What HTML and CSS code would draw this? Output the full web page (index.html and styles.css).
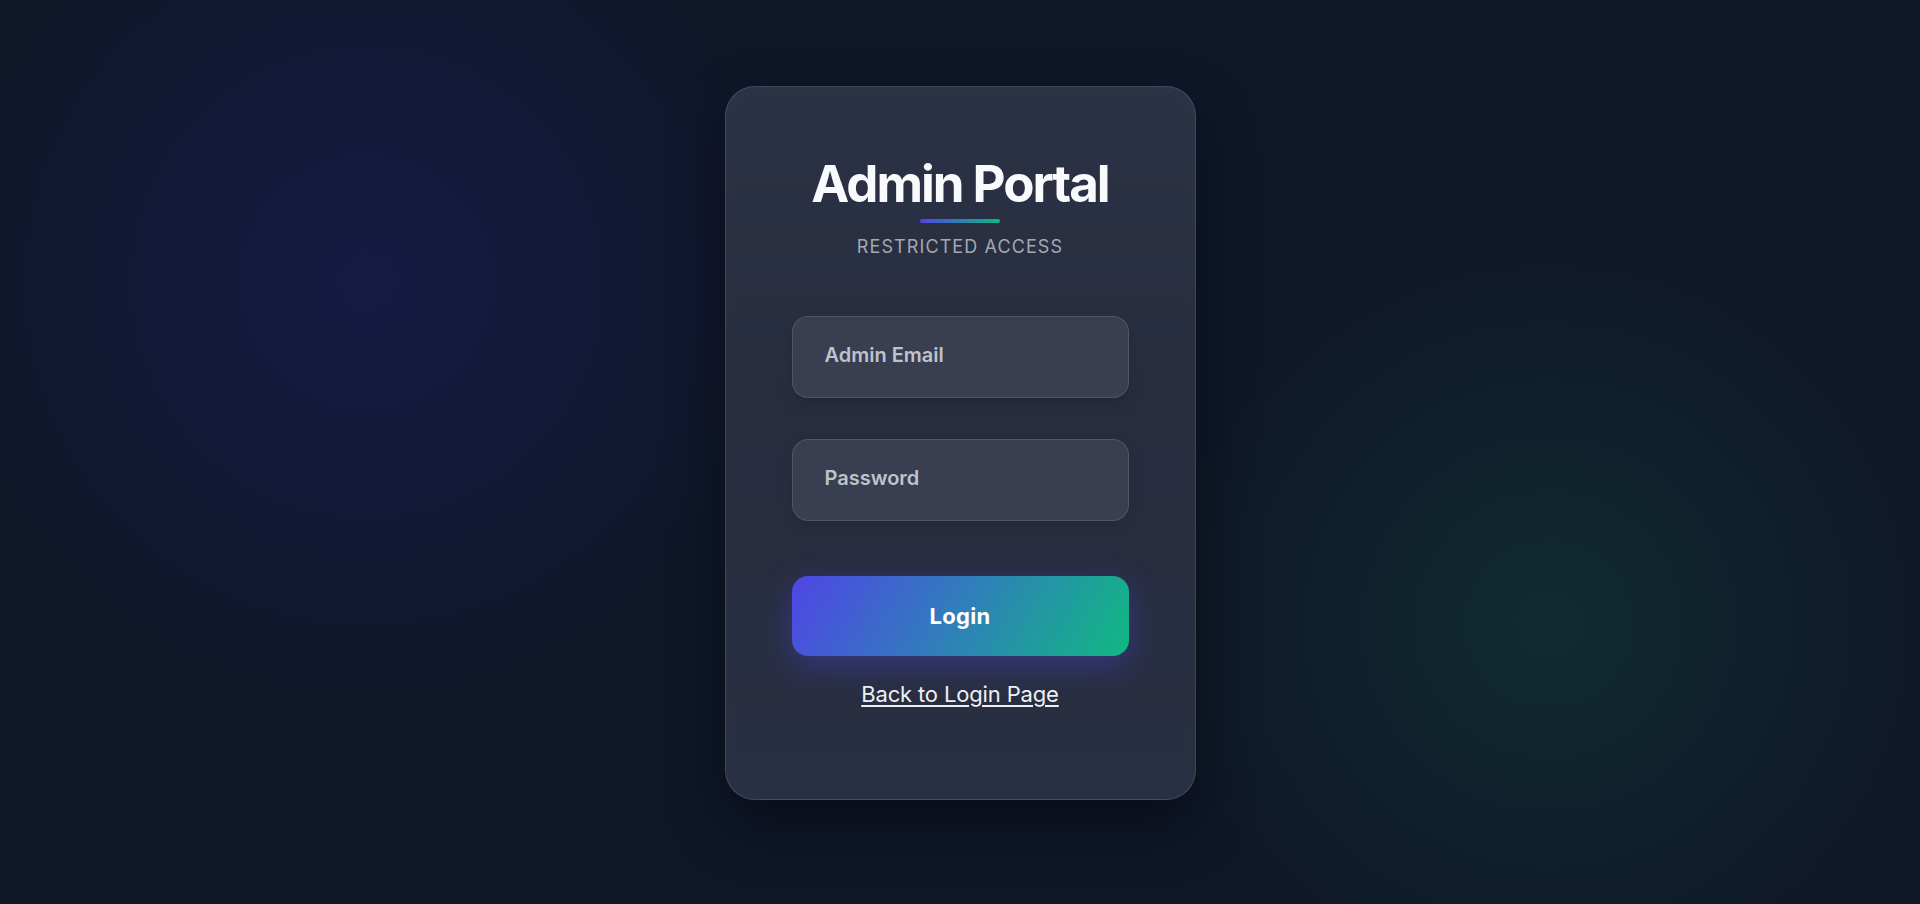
FILE: index.html
```html
<!DOCTYPE html>
<html lang="en">
<head>
<meta charset="utf-8">
<title>Admin Portal</title>
<link rel="stylesheet" href="styles.css">
</head>
<body>
<main class="page">
  <section class="card">
    <header class="card-header">
      <h1 class="title">Admin Portal</h1>
      <div class="accent-bar"></div>
      <p class="subtitle">RESTRICTED ACCESS</p>
    </header>
    <form class="form">
      <input class="field" type="email" placeholder="Admin Email">
      <input class="field" type="password" placeholder="Password">
      <button class="btn" type="button">Login</button>
    </form>
    <a class="back-link" href="#">Back to Login Page</a>
  </section>
</main>
</body>
</html>
```

FILE: styles.css
```css
* { box-sizing: border-box; }
html, body {
  margin: 0;
  height: 100%;
}
body {
  font-family: Inter, "Noto Sans", sans-serif;
  background-color: #0f1729;
  background-image:
    radial-gradient(circle at 367px 282px, rgba(26, 28, 78, 0.7) 0px, rgba(26, 28, 78, 0.45) 160px, rgba(26, 28, 78, 0) 420px),
    radial-gradient(circle at 1549px 624px, rgba(16, 52, 50, 0.7) 0px, rgba(16, 52, 50, 0.4) 160px, rgba(16, 52, 50, 0) 400px);
  overflow: hidden;
}
.page {
  height: 904px;
  display: flex;
  justify-content: center;
  align-items: flex-start;
  padding-top: 86px;
}
.card {
  width: 471px;
  height: 714px;
  padding: 66px 66px 0;
  border: 1px solid rgba(255, 255, 255, 0.12);
  border-radius: 30px;
  background: linear-gradient(180deg, #2c3245 0%, #272c3f 45%, #292f42 100%);
  box-shadow: 0 25px 60px rgba(0, 0, 0, 0.45), inset 0 0 30px rgba(255, 255, 255, 0.02);
  display: flex;
  flex-direction: column;
  align-items: stretch;
}
.card-header {
  display: flex;
  flex-direction: column;
  align-items: center;
  margin-bottom: 58px;
}
.title {
  margin: 0;
  font-size: 51px;
  font-weight: 700;
  letter-spacing: -2px;
  color: #f8fafc;
  line-height: 62px;
}
.accent-bar {
  width: 80px;
  height: 4px;
  border-radius: 2px;
  margin-top: 4px;
  background: linear-gradient(90deg, #4f46e5, #10b981);
}
.subtitle {
  margin: 13px 0 0;
  font-size: 18px;
  line-height: 22px;
  letter-spacing: 1.1px;
  color: #a3a8b4;
}
.form {
  display: flex;
  flex-direction: column;
}
.field {
  height: 82px;
  margin: 0 0 41px;
  padding: 0 32px 5px;
  border: 1px solid rgba(255, 255, 255, 0.12);
  border-radius: 16px;
  background: #393e51;
  font-family: inherit;
  font-size: 20px;
  font-weight: 600;
  color: #e5e7eb;
  outline: none;
  box-shadow: 0 6px 14px rgba(0, 0, 0, 0.12);
}
.field::placeholder { color: #bfc3cc; }
.form .field:nth-child(2) { margin-bottom: 55px; }
.btn {
  height: 80px;
  border: none;
  border-radius: 16px;
  background: linear-gradient(120deg, #4f46e5 0%, #2f80b9 50%, #10b981 100%);
  color: #ffffff;
  font-family: inherit;
  font-size: 22px;
  font-weight: 700;
  letter-spacing: 0.3px;
  box-shadow: 0 10px 32px rgba(79, 70, 229, 0.38);
  cursor: pointer;
}
.back-link {
  align-self: center;
  margin-top: 25px;
  font-size: 22px;
  line-height: 27px;
  letter-spacing: -0.15px;
  color: #eef0f4;
  text-decoration: underline;
  text-underline-offset: 3px;
}
```
